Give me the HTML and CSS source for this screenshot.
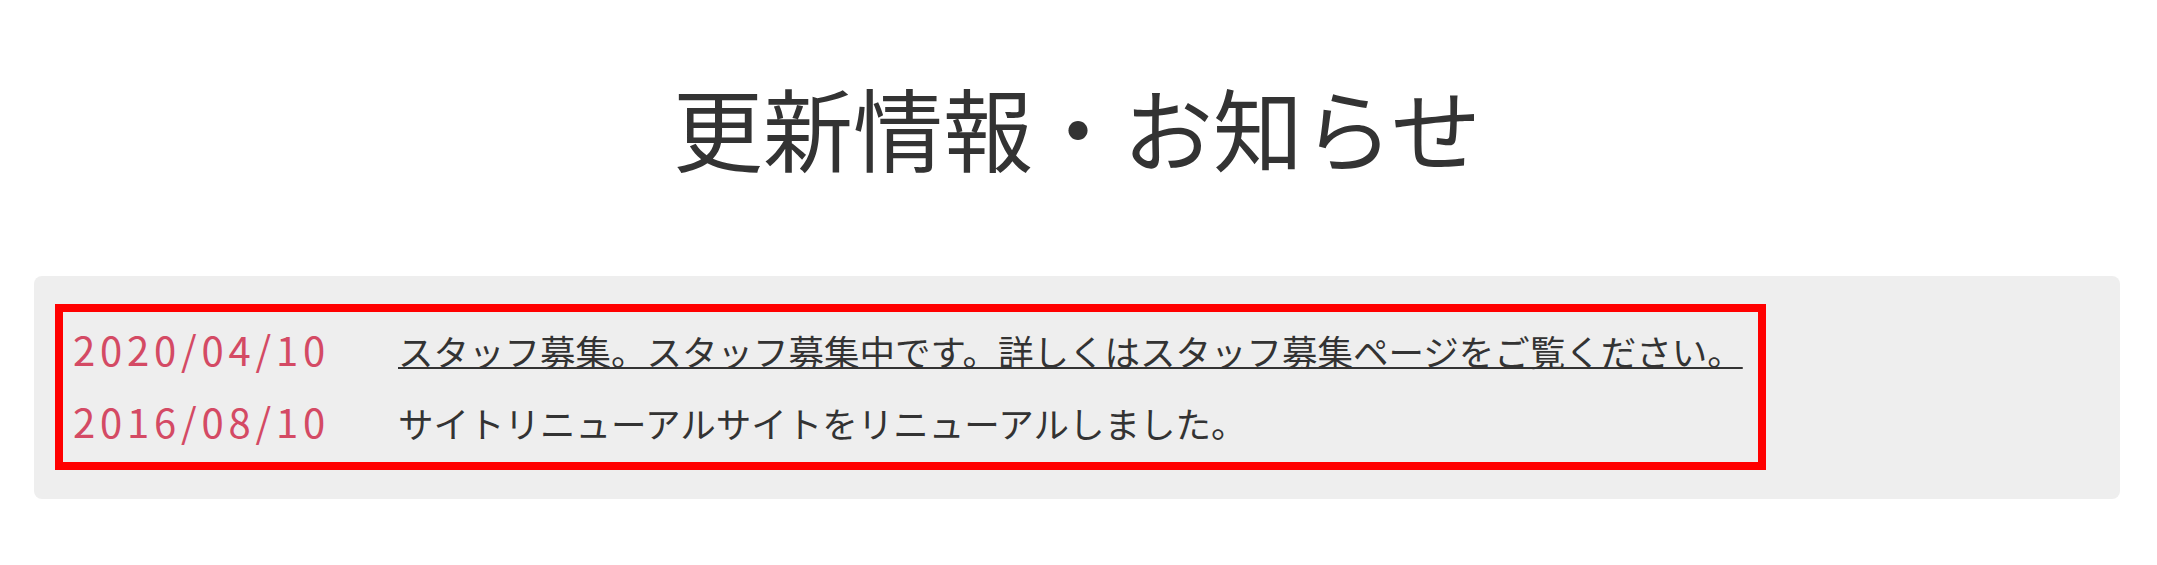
FILE: index.html
```html
<!DOCTYPE html>
<html lang="ja">

<head>
    <meta charset="UTF-8">
    <meta name="viewport" content="width=device-width, initial-scale=1.0">
    <title>更新情報・お知らせ</title>
    <link rel="stylesheet" href="styles.css">
</head>

<body>
    <section class="news">
        <h2 class="news-title">更新情報・お知らせ</h2>
        <div class="news-panel">
            <dl class="news-list">
                <div class="news-item">
                    <dt class="news-date">2020/04/10</dt>
                    <dd class="news-body"><a href="#">スタッフ募集。スタッフ募集中です。詳しくはスタッフ募集ページをご覧ください。</a></dd>
                </div>
                <div class="news-item">
                    <dt class="news-date">2016/08/10</dt>
                    <dd class="news-body">サイトリニューアルサイトをリニューアルしました。</dd>
                </div>
            </dl>
        </div>
    </section>
</body>

</html>
```

FILE: styles.css
```css
* {
    margin: 0;
    padding: 0;
    box-sizing: border-box;
}

body {
    background-color: #ffffff;
    color: #333333;
    font-family: "Noto Sans CJK JP", "Noto Sans", sans-serif;
}

.news {
    padding: 0 37px 0 34px;
}

.news-title {
    margin-top: 72px;
    font-size: 90px;
    font-weight: normal;
    line-height: 108px;
    text-align: center;
    color: #333333;
}

.news-panel {
    margin-top: 96px;
    padding: 28px 21px 29px;
    background-color: #eeeeee;
    border-radius: 8px;
}

.news-list {
    width: fit-content;
    padding: 3px 15px 3px 10px;
    border: 8px solid #ff0000;
}

.news-item {
    display: flex;
    align-items: baseline;
    line-height: 72px;
    font-size: 35.5px;
}

.news-date {
    width: 325px;
    flex-shrink: 0;
    font-size: 40px;
    line-height: 40px;
    color: #d44a64;
    letter-spacing: 0.12em;
}

.news-body {
    white-space: nowrap;
}

.news-body a {
    color: #333333;
    text-decoration: underline;
    text-decoration-thickness: 2px;
}
```
